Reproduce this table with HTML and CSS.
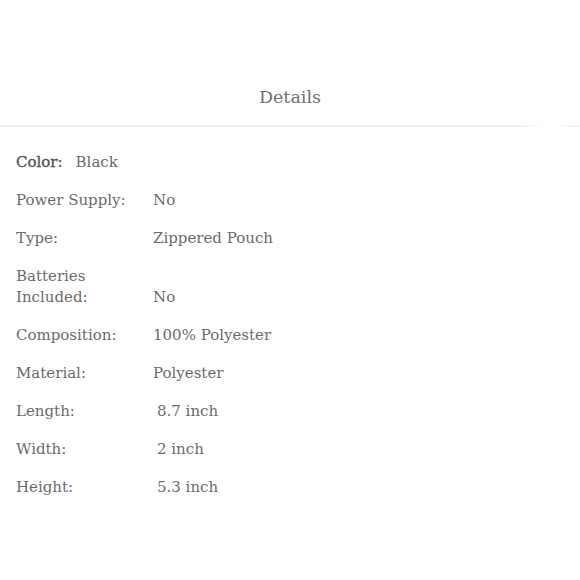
FILE: index.html
```html
<!DOCTYPE html>
<html>
<head>
<meta charset="utf-8">
<link rel="stylesheet" href="styles.css">
</head>
<body>
<div class="page">
  <header class="header">
    <h1 class="title">Details</h1>
  </header>
  <div class="divider"></div>
  <dl class="specs">
    <div class="row row-color"><dt class="key key-strong">Color:</dt><dd class="val">Black</dd></div>
    <div class="row"><dt class="key">Power Supply:</dt><dd class="val">No</dd></div>
    <div class="row"><dt class="key">Type:</dt><dd class="val">Zippered Pouch</dd></div>
    <div class="row row-end"><dt class="key">Batteries<br>Included:</dt><dd class="val">No</dd></div>
    <div class="row"><dt class="key">Composition:</dt><dd class="val">100% Polyester</dd></div>
    <div class="row"><dt class="key">Material:</dt><dd class="val">Polyester</dd></div>
    <div class="row"><dt class="key">Length:</dt><dd class="val val-pad">8.7 inch</dd></div>
    <div class="row"><dt class="key">Width:</dt><dd class="val val-pad">2 inch</dd></div>
    <div class="row"><dt class="key">Height:</dt><dd class="val val-pad">5.3 inch</dd></div>
  </dl>
</div>
</body>
</html>
```
FILE: styles.css
```css
html, body {
  margin: 0;
  padding: 0;
  background: #fff;
}
body {
  font-family: "DejaVu Serif", "Liberation Serif", serif;
  color: #6b6b6b;
}
.page {
  width: 580px;
  height: 580px;
  overflow: hidden;
}
.header {
  height: 125px;
  display: flex;
  align-items: flex-start;
  justify-content: center;
}
.title {
  margin: 86px 0 0;
  font-size: 17.5px;
  font-weight: normal;
  line-height: 22px;
  color: #707070;
}
.divider {
  height: 2px;
  background: linear-gradient(to right, #efefef 0, #efefef 520px, rgba(239,239,239,0) 545px, rgba(239,239,239,0) 560px, #f2f2f2 570px);
}
.specs {
  margin: 25px 0 0;
  padding: 0 0 0 16px;
  font-size: 15px;
  line-height: 21px;
}
.row {
  display: flex;
  align-items: flex-start;
  margin-bottom: 17px;
}
.row-end {
  align-items: flex-end;
}
.key {
  width: 137px;
  flex: none;
}
.key-strong {
  width: auto;
  color: #555;
  -webkit-text-stroke: 0.35px #555;
  margin-right: 13px;
}
.val {
  margin: 0;
}
.val-pad {
  padding-left: 4px;
}
```
